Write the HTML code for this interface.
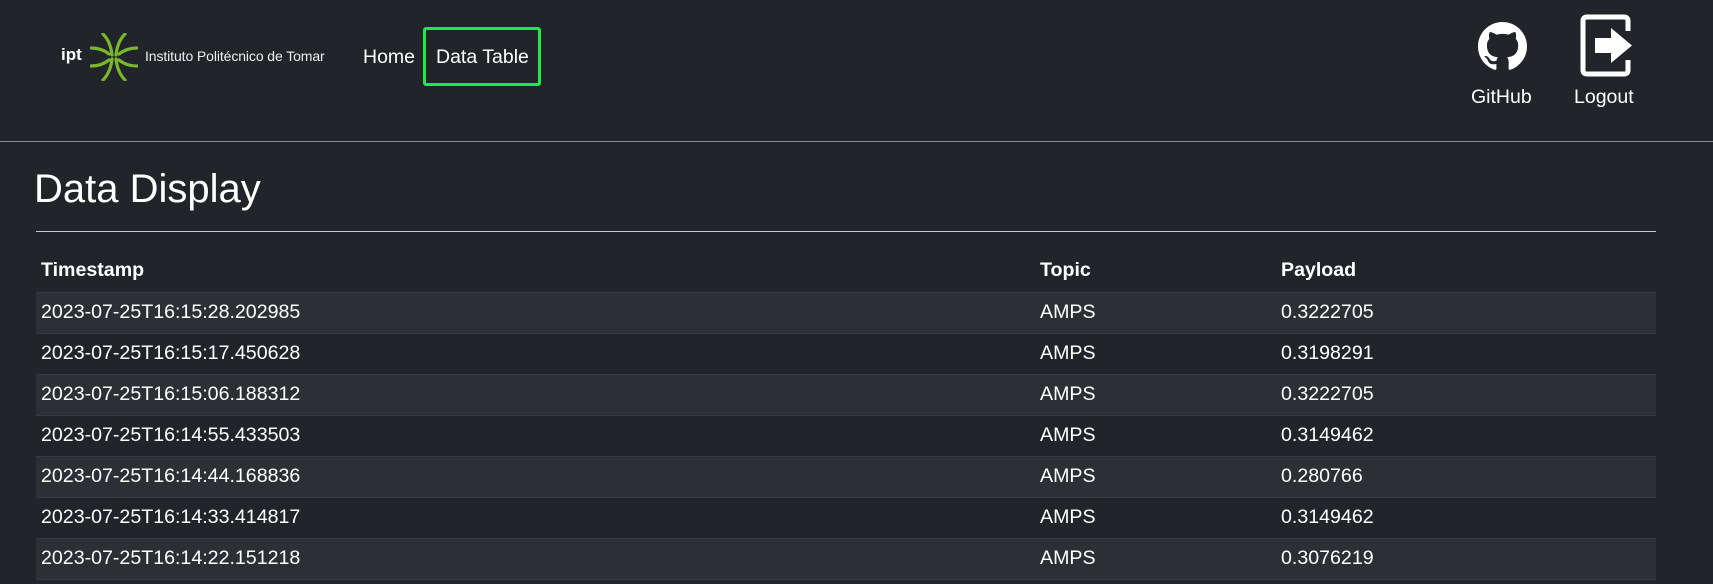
<!DOCTYPE html>
<html><head><meta charset="utf-8"><style>
*{margin:0;padding:0;box-sizing:border-box}
body{width:1713px;height:584px;overflow:hidden;background:#212529;color:#fff;font-family:"Liberation Sans",sans-serif;position:relative}
.abs{position:absolute;white-space:nowrap}
.nav{position:absolute;left:0;top:0;width:1713px;height:142px;border-bottom:1px solid #8a8c8e}
table{position:absolute;left:36px;top:250px;width:1620px;border-collapse:collapse;font-size:19.6px}
th{text-align:left;font-weight:bold;height:42px;padding:0 5px;vertical-align:middle;border-bottom:1px solid #373b3e}
td{height:41px;padding:0 5px;border-bottom:1px solid #373b3e;vertical-align:middle}
tbody tr:nth-child(odd) td{background:#2c3034}
</style></head><body>
<div class="nav"></div>
<div class="abs" style="left:61px;top:45px;font-size:17px;font-weight:bold">ipt</div>
<svg class="abs" style="left:90px;top:33px" width="48" height="48" viewBox="0 0 48 48" fill="none" stroke="#7ab72a" stroke-width="3.2" stroke-linecap="round">
<path d="M22 22 C21 13 18 6 13 1"/><path d="M26 22 C27 13 30 6 35 1"/>
<path d="M22 26 C21 35 18 42 13 47"/><path d="M26 26 C27 35 30 42 35 47"/>
<path d="M1 15 C8 15 14 17 19 21"/><path d="M47 15 C40 15 34 17 29 21"/>
<path d="M1 33 C8 33 14 31 19 27"/><path d="M47 33 C40 33 34 31 29 27"/>
</svg>
<div class="abs" style="left:145px;top:48px;font-size:14px;color:#eee;letter-spacing:-0.1px">Instituto Politécnico de Tomar</div>
<div class="abs" style="left:363px;top:46px;font-size:19.5px">Home</div>
<div class="abs" style="left:423px;top:27px;width:118px;height:59px;border:3px solid #1ee84a;border-radius:3px"></div>
<div class="abs" style="left:436px;top:46px;font-size:19.5px">Data Table</div>
<svg class="abs" style="left:1478px;top:22px" width="49" height="49" viewBox="0 0 16 16"><path fill="#fff" d="M8 0C3.58 0 0 3.58 0 8c0 3.54 2.29 6.53 5.47 7.59.4.07.55-.17.55-.38 0-.19-.01-.82-.01-1.490-2.010.37-2.53-.49-2.69-.94-.09-.23-.48-.94-.82-1.13-.28-.15-.68-.52-.01-.53.63-.01 1.080.58 1.23.82.72 1.21 1.87.87 2.33.66.07-.52.28-.87.51-1.07-1.78-.2-3.64-.89-3.64-3.95 0-.87.31-1.59.82-2.15-.08-.2-.36-1.02.08-2.12 0 0 .67-.21 2.2.82.64-.18 1.32-.27 2-.27.68 0 1.36.09 2 .27 1.53-1.04 2.2-.82 2.2-.82.44 1.1.16 1.92.08 2.12.51.56.82 1.27.82 2.15 0 3.07-1.87 3.75-3.65 3.95.29.25.54.73.54 1.48 0 1.07-.01 1.93-.01 2.2 0 .21.15.46.55.38A8.013 8.013 0 0016 8c0-4.42-3.58-8-8-8z"/></svg>
<div class="abs" style="left:1471px;top:86px;font-size:19.5px">GitHub</div>
<svg class="abs" style="left:1580px;top:14px" width="53" height="63" viewBox="0 0 53 63">
<path d="M48 17 V7 Q48 3 44 3 H7 Q3 3 3 7 V56 Q3 60 7 60 H44 Q48 60 48 56 V46" fill="none" stroke="#fff" stroke-width="5"/>
<path d="M15 24 H31 V14 L52 31.5 L31 49 V39 H15 Z" fill="#fff"/>
</svg>
<div class="abs" style="left:1574px;top:86px;font-size:19.5px">Logout</div>
<div class="abs" style="left:34px;top:167px;font-size:40px">Data Display</div>
<div class="abs" style="left:36px;top:231px;width:1620px;height:1px;background:#c8c9ca"></div>
<table>
<colgroup><col style="width:999px"><col style="width:241px"><col></colgroup>
<thead><tr><th>Timestamp</th><th>Topic</th><th>Payload</th></tr></thead>
<tbody>
<tr><td>2023-07-25T16:15:28.202985</td><td>AMPS</td><td>0.3222705</td></tr>
<tr><td>2023-07-25T16:15:17.450628</td><td>AMPS</td><td>0.3198291</td></tr>
<tr><td>2023-07-25T16:15:06.188312</td><td>AMPS</td><td>0.3222705</td></tr>
<tr><td>2023-07-25T16:14:55.433503</td><td>AMPS</td><td>0.3149462</td></tr>
<tr><td>2023-07-25T16:14:44.168836</td><td>AMPS</td><td>0.280766</td></tr>
<tr><td>2023-07-25T16:14:33.414817</td><td>AMPS</td><td>0.3149462</td></tr>
<tr><td>2023-07-25T16:14:22.151218</td><td>AMPS</td><td>0.3076219</td></tr>
</tbody></table>
</body></html>
